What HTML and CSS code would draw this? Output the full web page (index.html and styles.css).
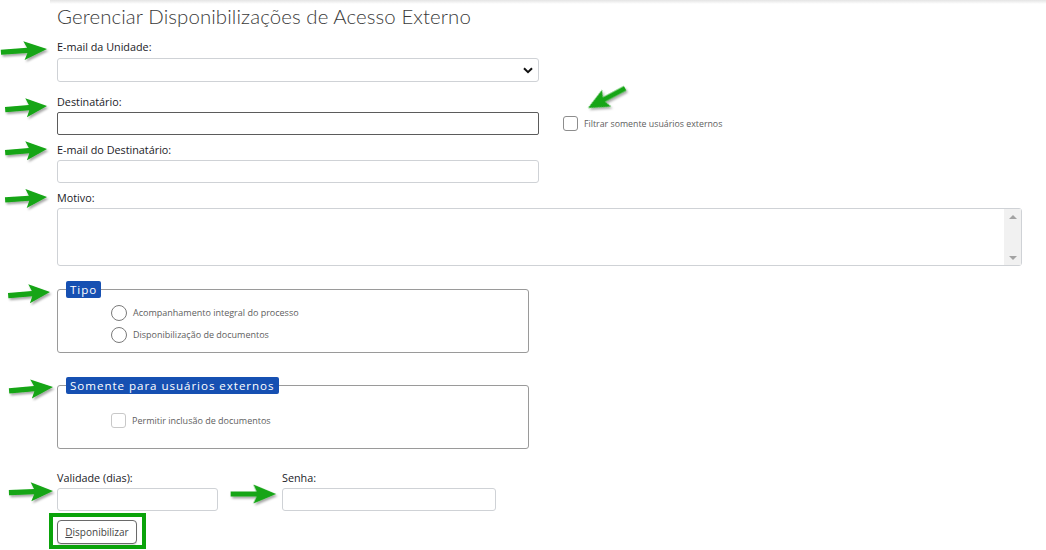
FILE: index.html
```html
<!DOCTYPE html>
<html lang="pt-BR">
<head>
<meta charset="utf-8">
<title>Gerenciar Disponibilizações de Acesso Externo</title>
<link rel="stylesheet" href="styles.css">
</head>
<body>
<div class="page">
  <div class="topshade"></div>
  <form class="form">
    <h1 class="title">Gerenciar Disponibilizações de Acesso Externo</h1>

    <div class="field f1">
      <label class="lbl">E-mail da Unidade:</label>
      <div class="select-wrap w-main">
        <select class="select"><option></option></select>
        <svg class="chev" width="10" height="7" viewBox="0 0 10 7"><path d="M1 1.2 L5 5.2 L9 1.2" fill="none" stroke="#111" stroke-width="2"/></svg>
      </div>
    </div>

    <div class="field f2">
      <label class="lbl">Destinatário:</label>
      <div class="row-dest">
        <input class="input w-main dark" type="text">
        <label class="chk-label filter">
          <span class="chk"></span>
          <span class="small">Filtrar somente usuários externos</span>
        </label>
      </div>
    </div>

    <div class="field f3">
      <label class="lbl">E-mail do Destinatário:</label>
      <input class="input w-main" type="text">
    </div>

    <div class="field f3">
      <label class="lbl">Motivo:</label>
      <div class="textarea-wrap">
        <textarea class="textarea"></textarea>
        <div class="fake-scroll">
          <span class="tri up"></span>
          <span class="tri down"></span>
        </div>
      </div>
    </div>

    <fieldset class="group g1">
      <legend class="legend">Tipo</legend>
      <div class="group-body">
        <label class="opt"><span class="radio"></span><span class="small">Acompanhamento integral do processo</span></label>
        <label class="opt"><span class="radio"></span><span class="small">Disponibilização de documentos</span></label>
      </div>
    </fieldset>

    <fieldset class="group g2">
      <legend class="legend">Somente para usuários externos</legend>
      <div class="group-body body2">
        <label class="opt"><span class="chk"></span><span class="small">Permitir inclusão de documentos</span></label>
      </div>
    </fieldset>

    <div class="row-bottom">
      <div class="field">
        <label class="lbl">Validade (dias):</label>
        <input class="input w-val" type="text">
      </div>
      <div class="field">
        <label class="lbl">Senha:</label>
        <input class="input w-pass" type="password">
      </div>
    </div>

    <div class="btn-frame">
      <button type="button" class="btn"><u>D</u>isponibilizar</button>
    </div>
  </form>

  <svg class="arrows" width="1046" height="550" viewBox="0 0 1046 550">
    <defs>
      <filter id="sh" x="-20%" y="-50%" width="160%" height="200%">
        <feDropShadow dx="1.5" dy="2" stdDeviation="1.3" flood-color="#000" flood-opacity="0.35"/>
      </filter>
      <polygon id="ar" points="-42,-2.6 -18,-2.6 -21,-9.5 0,0 -21,9.5 -18,2.6 -42,2.6"/>
    </defs>
    <g fill="#14a514" filter="url(#sh)">
      <use href="#ar" transform="translate(47,49) rotate(-4) scale(1.1,1)"/>
      <use href="#ar" transform="translate(47,106) rotate(-5)"/>
      <use href="#ar" transform="translate(47,149) rotate(-5)"/>
      <use href="#ar" transform="translate(47,197) rotate(-4)"/>
      <use href="#ar" transform="translate(50,292) rotate(-5)"/>
      <use href="#ar" transform="translate(53,387) rotate(-5) scale(1.05,1)"/>
      <use href="#ar" transform="translate(53,491) rotate(-2) scale(1.05,1)"/>
      <use href="#ar" transform="translate(276,494) rotate(0) scale(1.08,1)"/>
      <use href="#ar" transform="translate(588,108) rotate(152)"/>
    </g>
  </svg>
</div>
</body>
</html>
```

FILE: styles.css
```css
html, body {
  margin: 0;
  padding: 0;
  background: #fff;
}

.page {
  position: relative;
  width: 1046px;
  height: 550px;
  overflow: hidden;
  font-family: "Lato", "Open Sans", sans-serif;
  color: #222;
}

.topshade {
  margin-left: 50px;
  height: 4px;
  background: linear-gradient(#e4e4e4, #fff);
}

.form {
  margin: 0;
  padding: 0 0 0 57px;
}

.title {
  margin: 0;
  font-weight: 300;
  font-size: 20.4px;
  line-height: 24px;
  color: #3a3a3a;
  letter-spacing: 0.1px;
}

.field {
  display: flex;
  flex-direction: column;
  align-items: flex-start;
}

.f1 { margin-top: 13px; }
.f2 { margin-top: 14px; }
.f3 { margin-top: 9px; }

.lbl {
  display: block;
  font-family: "Open Sans", sans-serif;
  font-size: 10.8px;
  font-weight: 500;
  line-height: 12px;
  height: 12px;
  margin-bottom: 4px;
  color: #1a1a26;
}

.f1 .lbl { margin-bottom: 5px; }

.w-main { width: 482px; }
.w-val { width: 161px; }
.w-pass { width: 214px; }

.select-wrap {
  position: relative;
  height: 24px;
}

.select {
  appearance: none;
  -webkit-appearance: none;
  width: 100%;
  height: 24px;
  box-sizing: border-box;
  border: 1px solid #cfd2d6;
  border-radius: 3px;
  background: #fff;
  margin: 0;
}

.chev {
  position: absolute;
  right: 6px;
  top: 9px;
}

.input {
  box-sizing: border-box;
  height: 23px;
  margin: 0;
  border: 1px solid #cfd2d6;
  border-radius: 3px;
  background: #fff;
  padding: 0 4px;
}

.input.dark {
  border-color: #5b5b5b;
  border-radius: 2px;
}

.row-dest {
  display: flex;
  align-items: center;
  gap: 24px;
}

.chk-label, .opt {
  display: flex;
  align-items: center;
  gap: 6px;
}

.chk {
  display: inline-block;
  box-sizing: border-box;
  width: 15px;
  height: 15px;
  border: 1px solid #8d8d8d;
  border-radius: 3px;
  background: #fff;
}

.body2 .chk {
  border-color: #c8c8c8;
}

.radio {
  display: inline-block;
  box-sizing: border-box;
  width: 16px;
  height: 16px;
  border: 1px solid #7a7a7a;
  border-radius: 50%;
  background: #fff;
}

.small {
  font-family: "Open Sans", sans-serif;
  font-size: 9px;
  color: #5e5e5e;
  line-height: 12px;
}

.filter .small { font-size: 8.8px; }

.textarea-wrap {
  display: flex;
  box-sizing: border-box;
  width: 965px;
  height: 58px;
  border: 1px solid #cfd2d6;
  border-radius: 3px;
  background: #fff;
}

.textarea {
  flex: 1;
  border: none;
  resize: none;
  outline: none;
  margin: 0;
  padding: 2px;
  background: transparent;
}

.fake-scroll {
  width: 17px;
  background: #f1f1f1;
  display: flex;
  flex-direction: column;
  justify-content: space-between;
  align-items: center;
  padding: 6px 0 5px;
  box-sizing: border-box;
}

.tri {
  width: 0;
  height: 0;
  border-left: 4px solid transparent;
  border-right: 4px solid transparent;
}

.tri.up { border-bottom: 4px solid #a3a3a3; }
.tri.down { border-top: 4px solid #a3a3a3; }

.group {
  box-sizing: border-box;
  width: 472px;
  margin: 0;
  border: 1px solid #9a9a9a;
  border-radius: 3px;
  padding: 7px 0 9px 8px;
}

.g1 { margin-top: 15px; }
.g2 { margin-top: 24px; padding-top: 19px; padding-bottom: 20px; }

.legend {
  background: #1650b2;
  color: #fff;
  font-family: "Open Sans", sans-serif;
  font-size: 11.6px;
  line-height: 17px;
  height: 17px;
  padding: 0 4px;
  letter-spacing: 0.95px;
  border-radius: 2px;
  margin-left: 0;
}

.group-body {
  margin-left: 45px;
  display: flex;
  flex-direction: column;
  gap: 6px;
}

.row-bottom {
  display: flex;
  gap: 64px;
  margin-top: 23px;
}

.btn-frame {
  display: inline-block;
  margin-top: 2px;
  margin-left: -8px;
  border: 4px solid #0aa30a;
  padding: 3px 5px 1px 4px;
}

.btn {
  display: block;
  height: 24px;
  width: 80px;
  box-sizing: border-box;
  margin: 0;
  padding: 0;
  border: 1px solid #6a6a6a;
  border-radius: 4px;
  background: #fff;
  font-family: "Open Sans", sans-serif;
  font-size: 10px;
  color: #444;
  box-shadow: 0 1px 1px rgba(0,0,0,0.15);
}

.arrows {
  position: absolute;
  left: 0;
  top: 0;
  pointer-events: none;
}
```
